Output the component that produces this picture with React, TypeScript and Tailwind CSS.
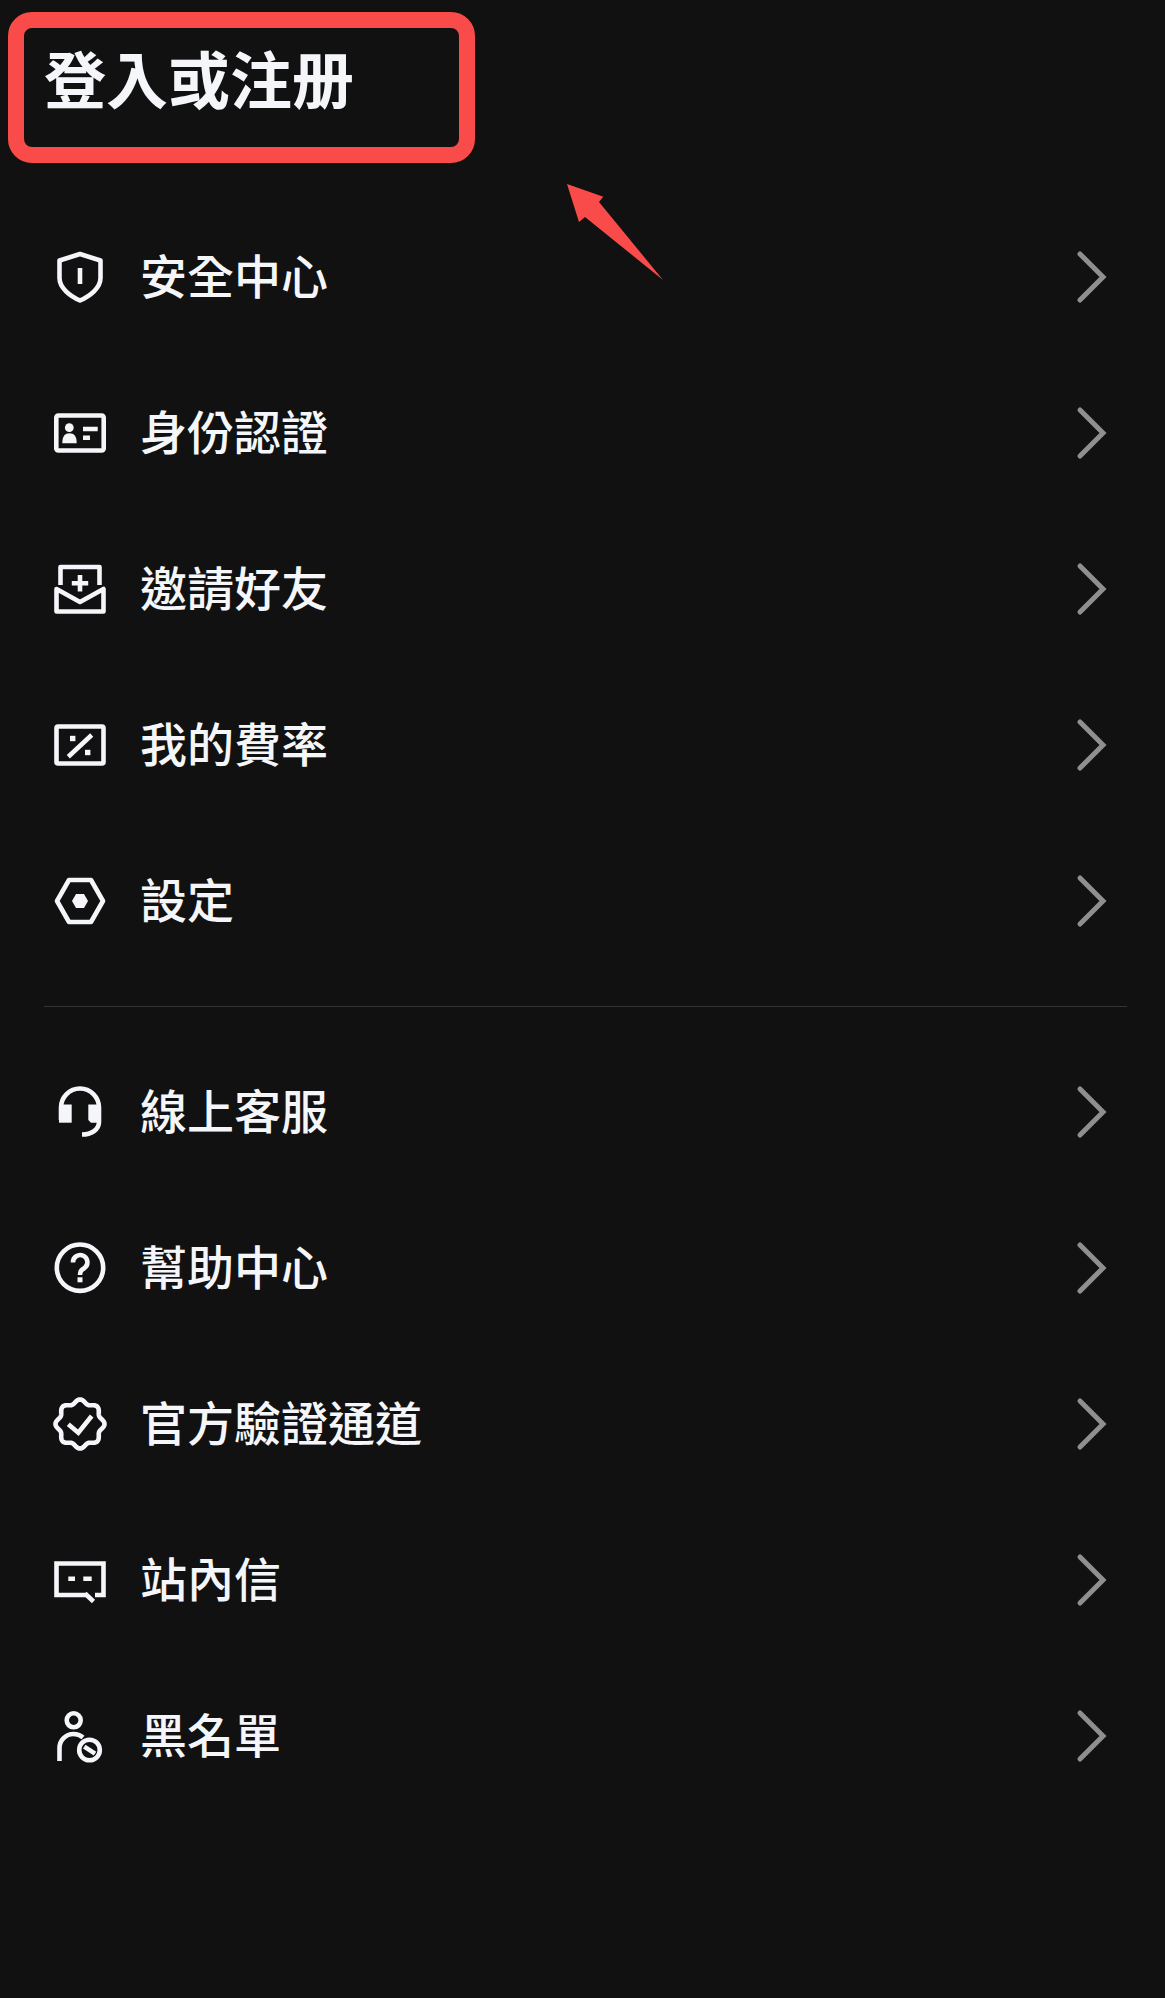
import React from "react";

const S = ({ children }: { children: React.ReactNode }) => (
  <svg width="52" height="52" viewBox="0 0 52 52" fill="none" stroke="#f4f6f9" strokeWidth="4.6" className="shrink-0 overflow-visible">
    {children}
  </svg>
);

function badgePath() {
  const pts: string[] = [];
  const n = 160;
  for (let i = 0; i < n; i++) {
    const t = (i / n) * Math.PI * 2;
    const r = 22.6 + 1.9 * Math.cos(8 * t);
    const x = 26 + r * Math.sin(t);
    const y = 26 - r * Math.cos(t);
    pts.push(`${i ? "L" : "M"}${x.toFixed(2)} ${y.toFixed(2)}`);
  }
  return pts.join(" ") + " Z";
}

const icons: Record<string, React.ReactNode> = {
  shield: (
    <S>
      <path d="M26 3 L46.5 9.5 V27 C46.5 37 36 45 26 49.5 C16 45 5.5 37 5.5 27 V9.5 Z" strokeLinejoin="round" />
      <path d="M26 17 V33" />
    </S>
  ),
  card: (
    <S>
      <rect x="2.3" y="8.5" width="47.4" height="35" rx="2" />
      <circle cx="15.3" cy="20.7" r="4.4" fill="#f4f6f9" stroke="none" />
      <path d="M8.3 36.3 C8.3 29 11 26.3 15.5 26.3 C20 26.3 22.7 29 22.7 36.3 Z" fill="#f4f6f9" stroke="none" />
      <path d="M29 22 H43.7 M29 30.7 H36" />
    </S>
  ),
  invite: (
    <S>
      <path d="M6.5 22 V4 H45.5 V22" strokeLinejoin="round" />
      <path d="M2.5 26 L26 39 L49.5 26 V48.5 H2.5 Z" strokeLinejoin="round" />
      <path d="M26 12 V28.5 M17.8 20.3 H34.2" />
    </S>
  ),
  percent: (
    <S>
      <rect x="2.5" y="7.5" width="47" height="37" rx="1.5" />
      <path d="M14.3 37.7 L37.7 16" />
      <rect x="16" y="16.8" width="5.4" height="5.4" fill="#f4f6f9" stroke="none" />
      <rect x="31" y="30.8" width="5.4" height="5.4" fill="#f4f6f9" stroke="none" />
    </S>
  ),
  hex: (
    <S>
      <path d="M3 26 L15 5 H37 L49 26 L37 47 H15 Z" strokeLinejoin="round" />
      <path d="M18 26 L22 19 H30 L34 26 L30 33 H22 Z" fill="#f4f6f9" stroke="none" />
    </S>
  ),
  headset: (
    <S>
      <path d="M7 34 V21.5 A19 19 0 0 1 45 21.5 V36 C45 44 37 48.5 28 48.5" />
      <path d="M5 18.5 H17.7 V36.7 H5 Z" fill="#f4f6f9" stroke="none" />
      <path d="M34.3 18.5 H47 V36.7 H37 L34.3 34 Z" fill="#f4f6f9" stroke="none" />
    </S>
  ),
  help: (
    <S>
      <circle cx="26" cy="25.7" r="23.2" />
      <path d="M19 20.5 A7.2 7.2 0 1 1 30.5 26 C27.5 28 26 29 26 33" />
      <rect x="23.5" y="35.3" width="5" height="5" fill="#f4f6f9" stroke="none" />
    </S>
  ),
  badge: (
    <S>
      <path d={badgePath()} />
      <path d="M14.3 26.3 L24.3 34.7 L37.7 18" />
    </S>
  ),
  chat: (
    <S>
      <path d="M33 41 H2.5 V9.5 H49.5 V41 H41" />
      <path d="M31 39.5 L39.5 47.5" />
      <path d="M14.3 24.7 H21 M29.3 24.7 H37.7" />
    </S>
  ),
  block: (
    <S>
      <circle cx="19.7" cy="10.3" r="7" />
      <path d="M5.5 51 V38 A14 14 0 0 1 19.5 24 Q25 24 29 27.5" />
      <circle cx="35.5" cy="40" r="10.3" />
      <path d="M30.3 36.7 L41 43.7" />
    </S>
  ),
};

const Row = ({ icon, label }: { icon: string; label: string }) => (
  <div className="flex h-[156px] items-center pl-[54px] pr-[58px]">
    {icons[icon]}
    <span className="mb-[7px] ml-[34px] flex-1 text-[47px] font-medium leading-none text-[#f4f6f9]">{label}</span>
    <svg width="34" height="60" viewBox="0 0 34 60" fill="none" stroke="#8f8f8f" strokeWidth="5" className="shrink-0">
      <path d="M7 7 L30 30 L7 53" strokeLinecap="round" strokeLinejoin="miter" />
    </svg>
  </div>
);

export default function App() {
  return (
    <div
      className="relative h-[1998px] w-[1165px] overflow-hidden bg-[#111111]"
      style={{ fontFamily: '"Noto Sans CJK TC", "Noto Sans CJK SC", sans-serif' }}
    >
      <div className="pl-[8px] pt-[12px]">
        <div className="flex h-[151px] w-[467px] items-center rounded-[24px] border-[16px] border-[#f94c4a] pb-[21px] pl-[20px]">
          <span className="text-[62px] font-bold leading-none text-[#f4f6f9]">登入或注册</span>
        </div>
      </div>

      <svg width="110" height="110" viewBox="0 0 110 110" className="absolute left-[560px] top-[178px]">
        <path d="M7 6 L43.3 18.7 L39 24 L103 102 L25 39 L19 44 Z" fill="#f94c4a" />
      </svg>

      <div className="mt-[36px]">
        <Row icon="shield" label="安全中心" />
        <Row icon="card" label="身份認證" />
        <Row icon="invite" label="邀請好友" />
        <Row icon="percent" label="我的費率" />
        <Row icon="hex" label="設定" />
      </div>
      <div className="my-[27px] ml-[44px] mr-[38px] h-px bg-[#343434]" />
      <div>
        <Row icon="headset" label="線上客服" />
        <Row icon="help" label="幫助中心" />
        <Row icon="badge" label="官方驗證通道" />
        <Row icon="chat" label="站內信" />
        <Row icon="block" label="黑名單" />
      </div>
    </div>
  );
}
